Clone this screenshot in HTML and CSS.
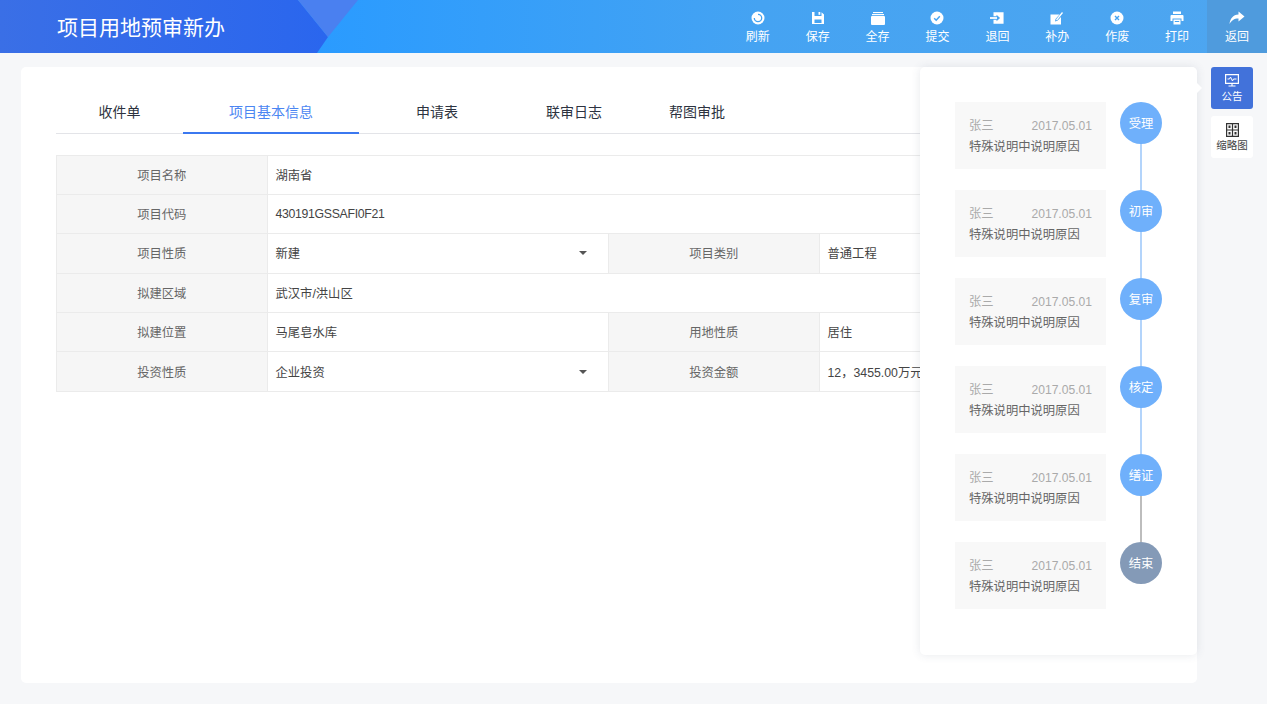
FILE: index.html
```html
<!DOCTYPE html>
<html lang="zh-CN">
<head>
<meta charset="utf-8">
<title>项目用地预审新办</title>
<link rel="stylesheet" href="styles.css">
</head>
<body>
<header class="topbar">
  <svg class="topbar-shape" width="360" height="53" viewBox="0 0 360 53" aria-hidden="true">
    <defs><linearGradient id="hd" x1="0" x2="1" y1="0" y2="0"><stop offset="0" stop-color="#3a6fe6"/><stop offset="1" stop-color="#2a66ee"/></linearGradient></defs>
    <polygon points="0,0 298,0 328,37 317,53 0,53" fill="url(#hd)"/>
    <polygon points="298,0 358,0 328,37" fill="#4a80f0"/>
  </svg>
  <h1 class="title">项目用地预审新办</h1>
  <nav class="tools">
    <a class="tool"><svg viewBox="0 0 14 14"><circle cx="7" cy="7" r="6.5" fill="#fff"/><path d="M7 3.300a3.700 3.700 0 1 1-3.700 3.700" fill="none" stroke="#45a3f2" stroke-width="1.300"/></svg><span>刷新</span></a>
    <a class="tool"><svg viewBox="0 0 14 14"><path d="M1 1h2.500v4h7V1.300L13 3.500V13H1z" fill="#fff"/><rect x="7.500" y="1" width="1.800" height="2.800" fill="#fff"/><rect x="3.500" y="8.500" width="7" height="3.500" fill="#45a3f2"/></svg><span>保存</span></a>
    <a class="tool"><svg viewBox="0 0 14 14"><rect x="0" y="5" width="14" height="9" rx="1" fill="#fff"/><rect x="1" y="3" width="12" height="1.200" fill="#fff"/><rect x="2" y="1" width="10" height="1.100" fill="#fff"/></svg><span>全存</span></a>
    <a class="tool"><svg viewBox="0 0 14 14"><circle cx="7" cy="7" r="6.500" fill="#fff"/><path d="M4.200 7.200 6.200 9.200 9.800 5.300" fill="none" stroke="#45a3f2" stroke-width="1.500"/></svg><span>提交</span></a>
    <a class="tool"><svg viewBox="0 0 16 14"><path d="M4 0.500h11.500v13H4V9h3.500v1.800L11.500 7 7.500 3.200V5H4z" fill="#fff"/><rect x="0" y="6" width="8" height="2" fill="#fff"/></svg><span>退回</span></a>
    <a class="tool"><svg viewBox="0 0 14 14"><path d="M0.500 3.500h9l-4 4.500-.5 2.500 2.500-.8 3.500-3.700V13.500H0.500z" fill="#fff"/><path d="M6.500 9 12.500 1.500" stroke="#fff" stroke-width="1.300"/></svg><span>补办</span></a>
    <a class="tool"><svg viewBox="0 0 14 14"><circle cx="7" cy="7" r="6.500" fill="#fff"/><path d="M5 5 9 9M9 5 5 9" stroke="#45a3f2" stroke-width="1.400"/></svg><span>作废</span></a>
    <a class="tool"><svg viewBox="0 0 14 14"><rect x="3" y="0.500" width="8" height="2.500" fill="#fff"/><path d="M1.500 4h11a1 1 0 0 1 1 1v5H11.500V7.500H2.500V10H0.500V5a1 1 0 0 1 1-1z" fill="#fff"/><path d="M3.500 8.500h7v5h-7z" fill="#fff"/><rect x="4.800" y="10" width="4.400" height="1" fill="#45a3f2"/></svg><span>打印</span></a>
    <a class="tool tool-back"><svg viewBox="0 0 16 14"><path d="M9.500 0.500 15.500 5.500 9.500 10.500V7.500C5 7.500 2.500 9.500 0.500 13 1 8 4 3.700 9.500 3.500z" fill="#fff"/></svg><span>返回</span></a>
  </nav>
</header>

<main class="page">
  <section class="card">
    <div class="tabs">
      <a class="tab tab-a">收件单</a>
      <a class="tab tab-b tab-active">项目基本信息</a>
      <a class="tab tab-c">申请表</a>
      <a class="tab tab-d">联审日志</a>
      <a class="tab tab-e">帮图审批</a>
    </div>
    <table class="form">
      <colgroup><col class="c-label"><col class="c-value"><col class="c-label"><col></colgroup>
      <tr class="r39"><th>项目名称</th><td colspan="3">湖南省</td></tr>
      <tr class="r39"><th>项目代码</th><td colspan="3" class="latin">430191GSSAFI0F21</td></tr>
      <tr><th>项目性质</th><td><div class="select"><span>新建</span><i class="caret"></i></div></td><th>项目类别</th><td>普通工程</td></tr>
      <tr><th>拟建区域</th><td colspan="3">武汉市/洪山区</td></tr>
      <tr class="r39"><th>拟建位置</th><td>马尾皂水库</td><th>用地性质</th><td>居住</td></tr>
      <tr class="r40"><th>投资性质</th><td><div class="select"><span>企业投资</span><i class="caret"></i></div></td><th>投资金额</th><td>12，3455.00万元</td></tr>
    </table>
  </section>

  <aside class="panel">
    <div class="step"><div class="note"><div class="note-head"><span>张三</span><span class="date">2017.05.01</span></div><p>特殊说明中说明原因</p></div><div class="dot">受理</div></div>
    <div class="step"><div class="note"><div class="note-head"><span>张三</span><span class="date">2017.05.01</span></div><p>特殊说明中说明原因</p></div><div class="dot">初审</div></div>
    <div class="step"><div class="note"><div class="note-head"><span>张三</span><span class="date">2017.05.01</span></div><p>特殊说明中说明原因</p></div><div class="dot">复审</div></div>
    <div class="step"><div class="note"><div class="note-head"><span>张三</span><span class="date">2017.05.01</span></div><p>特殊说明中说明原因</p></div><div class="dot">核定</div></div>
    <div class="step step-gray"><div class="note"><div class="note-head"><span>张三</span><span class="date">2017.05.01</span></div><p>特殊说明中说明原因</p></div><div class="dot">缮证</div></div>
    <div class="step"><div class="note"><div class="note-head"><span>张三</span><span class="date">2017.05.01</span></div><p>特殊说明中说明原因</p></div><div class="dot dot-end">结束</div></div>
  </aside>

  <div class="side">
    <a class="side-btn side-active"><svg width="14" height="13" viewBox="0 0 14 13"><path d="M0.600 0.600h12.800v8.800H0.600z" fill="none" stroke="#fff" stroke-width="1.200"/><path d="M2.500 5h2l1-2 2 4 1-2h3" fill="none" stroke="#fff"/><path d="M7 9.500v2M3.500 12h7" stroke="#fff" stroke-width="1.200"/></svg><span>公告</span></a>
    <a class="side-btn"><svg width="13" height="14" viewBox="0 0 13 14"><path d="M0.600 0.600h11.800v12.800H0.600zM6.500 0.600v12.800M0.600 7h11.800" fill="none" stroke="#333" stroke-width="1.200"/><rect x="2.500" y="2.500" width="2" height="2.500" fill="#333"/><rect x="8.500" y="2.500" width="2" height="2.500" fill="#333"/><rect x="2.500" y="9" width="2" height="2.500" fill="#333"/><rect x="8.500" y="9" width="2" height="2.500" fill="#333"/></svg><span>缩略图</span></a>
  </div>
</main>
</body>
</html>
```

FILE: styles.css
```css
* { box-sizing: border-box; }
html, body { margin: 0; height: 100%; }
body {
  width: 1267px;
  height: 704px;
  overflow: hidden;
  background: #f6f7f9;
  font-family: "Liberation Sans", "Noto Sans CJK SC", sans-serif;
  color: #333;
}

.topbar {
  position: relative;
  display: flex;
  align-items: stretch;
  justify-content: space-between;
  height: 53px;
  background: linear-gradient(90deg, #2a9bff 25%, #45a3f2 60%, #4ea6f0 100%);
}
.topbar-shape { position: absolute; left: 0; top: 0; }
.title {
  position: relative;
  margin: 0 0 0 57px;
  font-size: 21px;
  font-weight: 400;
  line-height: 55px;
  color: #fff;
}
.tools { display: flex; }
.tool {
  display: flex;
  flex-direction: column;
  align-items: center;
  width: 59.900px;
  padding-top: 11px;
  font-size: 12px;
  line-height: 17px;
  color: #fff;
}
.tool svg { width: 14px; height: 14px; margin-bottom: 4px; }
.tool-back { background: #4f9bdd; width: 60px; }
.tool-back svg { width: 16px; }

.page { position: relative; padding: 14px 70px 21px 21px; height: 651px; }
.card {
  height: 616px;
  padding: 28px 35px 0;
  background: #fff;
  border-radius: 5px;
}
.tabs { display: flex; height: 39px; border-bottom: 1px solid #e3e4e8; }
.tab {
  height: 39px;
  padding-top: 8px;
  text-align: center;
  font-size: 14px;
  line-height: 18px;
  color: #2d3340;
}
.tab-a { width: 127px; }
.tab-b { width: 176px; }
.tab-c { width: 156px; }
.tab-d { width: 118px; }
.tab-e { width: 128px; }
.tab-active { color: #4b86f2; border-bottom: 2px solid #3b78f0; }

.form {
  width: 1106px;
  margin-top: 21px;
  border-collapse: collapse;
  table-layout: fixed;
  font-size: 12.300px;
}
.c-label { width: 211px; }
.c-value { width: 341px; }
.form th, .form td {
  height: 39.500px;
  padding: 0 8px 0 7.500px;
  border: 1px solid #ebebeb;
  font-weight: 400;
}
.form .r39 th, .form .r39 td { height: 39px; }
.form .r40 th, .form .r40 td { height: 40px; }
.form th { background: #f6f6f6; color: #666; }
.form td { color: #444; background: #fff; }
.form .latin { letter-spacing: -.32px; }
.select { display: flex; align-items: center; justify-content: space-between; padding-right: 13px; }
.caret {
  width: 0;
  height: 0;
  border: 4px solid transparent;
  border-top: 4px solid #555;
  border-bottom: 0;
}

.panel {
  position: absolute;
  left: 920px;
  top: 14px;
  width: 277px;
  height: 588px;
  padding: 35px 35px 0;
  display: flex;
  flex-direction: column;
  gap: 21px;
  background: #fff;
  border-radius: 5px;
  box-shadow: 0 0 10px rgba(60, 70, 110, .12);
}
.panel::after {
  content: "";
  position: absolute;
  right: -5px;
  top: 16px;
  width: 0;
  height: 0;
  border: 5px solid transparent;
  border-left-color: #fff;
  border-right: 0;
}
.step { position: relative; display: flex; justify-content: space-between; height: 67px; }
.step::after {
  content: "";
  position: absolute;
  right: 20px;
  top: 42px;
  width: 2px;
  height: 46px;
  background: #b3d4fb;
}
.step-gray::after { background: #bdbdbd; }
.step:last-child::after { display: none; }
.note {
  width: 151px;
  height: 67px;
  padding: 14px 14px 0;
  background: #f8f8f8;
  font-size: 12.300px;
  line-height: 21px;
  color: #666;
}
.note-head { display: flex; justify-content: space-between; color: #aaa; }
.date { font-size: 12.100px; }
.note p { margin: 0; }
.dot {
  position: relative;
  z-index: 1;
  width: 42px;
  height: 42px;
  border-radius: 50%;
  background: #6fb0fb;
  color: #fff;
  font-size: 12.300px;
  line-height: 44px;
  text-align: center;
}
.dot-end { background: #849ab7; }

.side {
  position: absolute;
  left: 1211px;
  top: 14px;
  display: flex;
  flex-direction: column;
  gap: 7px;
}
.side-btn {
  display: flex;
  flex-direction: column;
  align-items: center;
  width: 42px;
  height: 42px;
  padding-top: 7px;
  border-radius: 3px;
  background: #fff;
  color: #444;
  font-size: 10.500px;
  line-height: 14px;
}
.side-btn svg { margin-bottom: 1px; }
.side-active { background: #4272da; color: #fff; }
.side-active svg { margin-bottom: 2px; }
```
